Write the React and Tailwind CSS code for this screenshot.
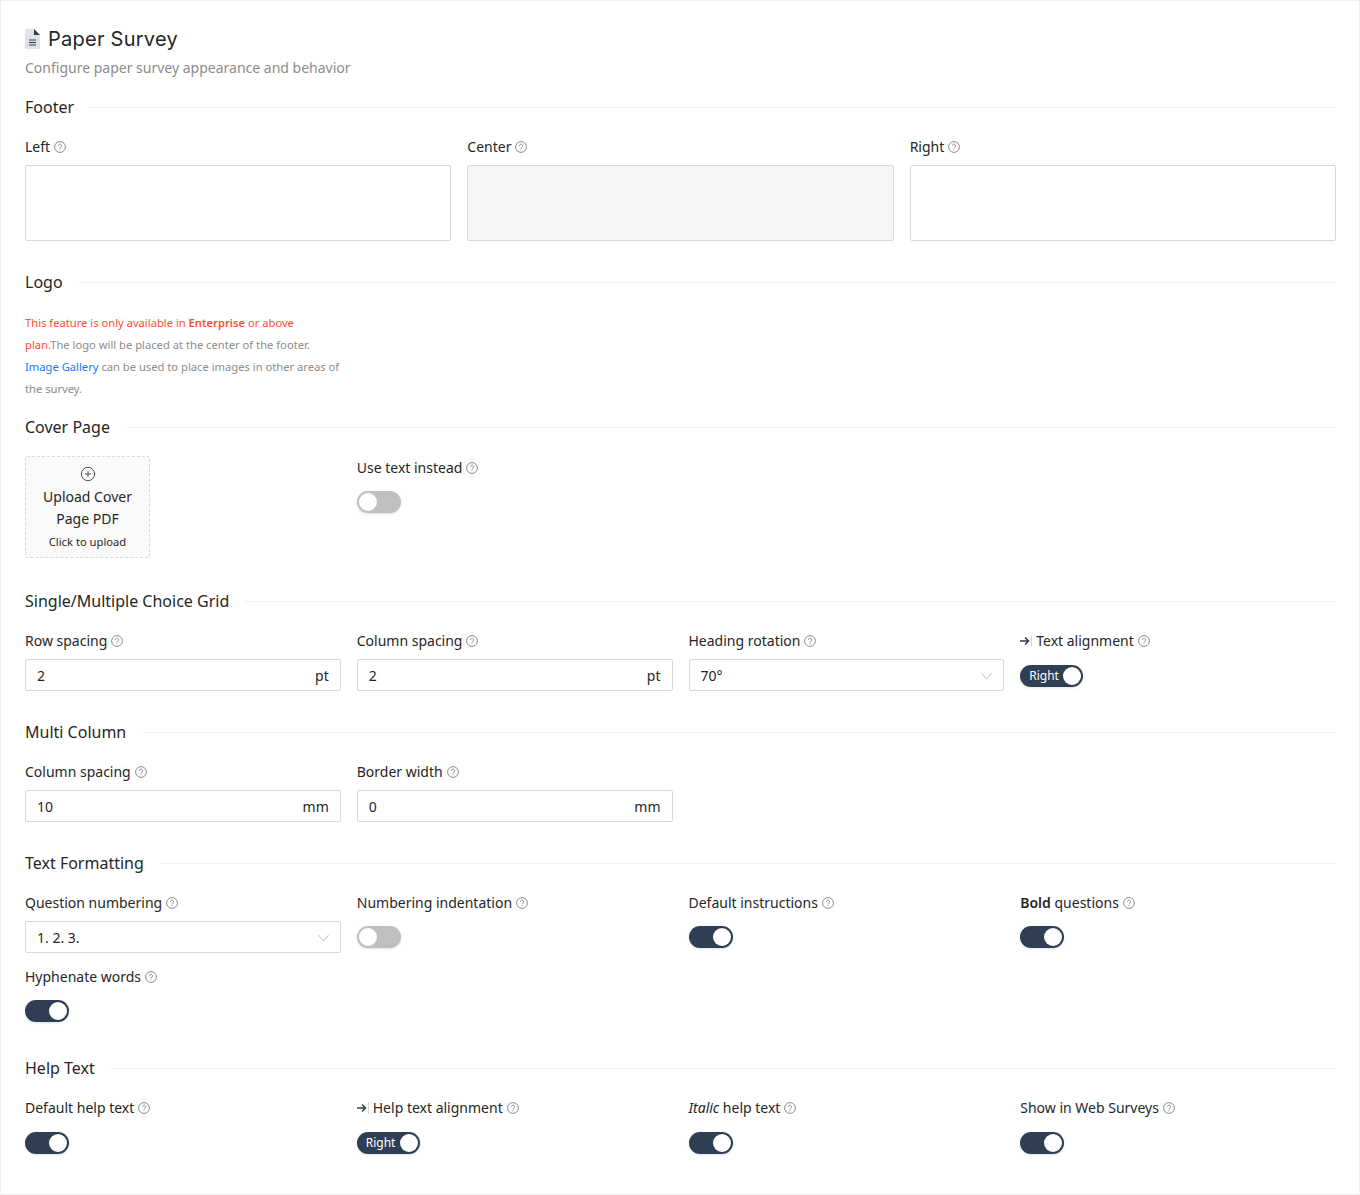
import { CirclePlus } from 'lucide-react'

function Help() {
  return (
    <svg width="12" height="12" viewBox="0 0 12 12" fill="none" stroke="#808080" strokeWidth="0.9" className="ml-1 shrink-0">
      <circle cx="6" cy="6" r="5.4" />
      <path d="M4.4 4.8a1.6 1.6 0 1 1 2.4 1.4c-.5.3-.8.6-.8 1.2" />
      <path d="M6 8.3v.9" />
    </svg>
  )
}

function AlignIcon() {
  return (
    <svg width="13" height="12" viewBox="0 0 13 12" fill="none" className="mr-[3px] shrink-0">
      <path d="M0 6h8M5 2.5 8.5 6 5 9.5" stroke="#2f3e52" strokeWidth="1.5" />
      <path d="M11.5 0.5v11" stroke="#d9d9d9" strokeWidth="1" />
    </svg>
  )
}

function Label({ children, icon }) {
  return (
    <div className="flex h-[22px] items-center text-sm leading-[22px] text-[#262626]">
      {icon && <AlignIcon />}
      <span>{children}</span>
      <Help />
    </div>
  )
}

function Section({ title, className, children }) {
  return (
    <section className={className}>
      <div className="flex h-6 items-center">
        <h3 className="mr-4 text-base font-normal leading-6 text-[#262626]">{title}</h3>
        <div className="h-px flex-1 bg-[#f0f0f0]" />
      </div>
      {children}
    </section>
  )
}

function Toggle({ on, text }) {
  if (text) {
    return (
      <div className="relative h-[22px] w-[63px] rounded-full bg-[#2f3e52] shadow-sm">
        <span className="absolute left-[9px] top-0 text-xs leading-[22px] text-white">{text}</span>
        <span className="absolute right-[2px] top-[2px] h-[18px] w-[18px] rounded-full bg-white" />
      </div>
    )
  }
  return (
    <div className={`relative h-[22px] w-11 rounded-full shadow-sm ${on ? 'bg-[#2f3e52]' : 'bg-[#bfbfbf]'}`}>
      <span className={`absolute top-[2px] h-[18px] w-[18px] rounded-full bg-white ${on ? 'right-[2px]' : 'left-[2px]'}`} />
    </div>
  )
}

function ToggleField({ label, on, text, icon, loose }) {
  return (
    <div>
      <Label icon={icon}>{label}</Label>
      <div className={loose ? 'mt-[13px]' : 'mt-3'}>
        <Toggle on={on} text={text} />
      </div>
    </div>
  )
}

function UnitInput({ label, value, unit }) {
  return (
    <div>
      <Label>{label}</Label>
      <div className="mt-[7px] flex h-8 items-center justify-between rounded-[2px] border border-[#d9d9d9] bg-white px-[11px] pt-px text-sm text-[#262626]">
        <span>{value}</span>
        <span>{unit}</span>
      </div>
    </div>
  )
}

function SelectField({ label, value }) {
  return (
    <div>
      <Label>{label}</Label>
      <div className="mt-[7px] flex h-8 items-center justify-between rounded-[2px] border border-[#d9d9d9] bg-white px-[11px] pt-px text-sm text-[#262626]">
        <span>{value}</span>
        <svg width="11" height="8" viewBox="0 0 11 8" fill="none">
          <path d="M0.5 1 5.5 7 10.5 1" stroke="#bfbfbf" strokeWidth="1" />
        </svg>
      </div>
    </div>
  )
}

function TextBox({ label, disabled }) {
  return (
    <div>
      <Label>{label}</Label>
      <div className={`mt-[7px] h-[76px] rounded-[2px] border border-[#d9d9d9] ${disabled ? 'bg-[#f5f5f5]' : 'bg-white'}`} />
    </div>
  )
}

export default function App() {
  return (
    <div className="h-[1195px] border border-[#f0f0f0] bg-white pl-6 pr-[23px] pt-[21px] font-['Noto_Sans',sans-serif]">
      <header>
        <div className="flex h-[34px] items-center">
          <svg width="15" height="20" viewBox="0 0 15 20" className="mr-2 shrink-0">
            <path d="M1.5 0H9l6 6v12.5a1.5 1.5 0 0 1-1.5 1.5h-12A1.5 1.5 0 0 1 0 18.5v-17A1.5 1.5 0 0 1 1.5 0z" fill="#dfe2e6" />
            <path d="M9 0l6 6H9z" fill="#2f3e52" />
            <path d="M4 11h7M4 13.5h7M4 16h7" stroke="#2f3e52" strokeWidth="1" />
          </svg>
          <h1 className="font-['Inter',sans-serif] text-[20px] font-normal leading-[34px] tracking-[0.25px] text-[#262626]">Paper Survey</h1>
        </div>
        <p className="mt-px text-sm leading-[22px] text-[#8c8c8c]">Configure paper survey appearance and behavior</p>
      </header>

      <Section title="Footer" className="mt-4">
        <div className="mt-[17px] grid grid-cols-3 gap-4">
          <TextBox label="Left" />
          <TextBox label="Center" disabled />
          <TextBox label="Right" />
        </div>
      </Section>

      <Section title="Logo" className="mt-[29px]">
        <p className="mt-[18px] w-[316px] text-[11.2px] leading-[22px] text-[#8c8c8c]">
          <span className="text-[#ff4d2e]">
            This feature is only available in <b className="font-semibold">Enterprise</b> or above
            <br />
            plan.
          </span>
          The logo will be placed at the center of the footer.
          <br />
          <span className="text-[#1677ff]">Image Gallery</span> can be used to place images in other areas of the survey.
        </p>
      </Section>

      <Section title="Cover Page" className="mt-[15px]">
        <div className="mt-[17px] grid grid-cols-4 gap-4">
          <div className="flex h-[102px] w-[125px] flex-col items-center rounded-[2px] border border-dashed border-[#d9d9d9] bg-[#fafafa] pt-[9px] text-center text-[#262626]">
            <CirclePlus size={16} strokeWidth={1.2} />
            <div className="mt-1 text-sm leading-[22px]">Upload Cover Page PDF</div>
            <div className="mt-px text-[11.2px] leading-[22px]">Click to upload</div>
          </div>
          <div className="pt-px">
            <ToggleField label="Use text instead" />
          </div>
        </div>
      </Section>

      <Section title="Single/Multiple Choice Grid" className="mt-[31px]">
        <div className="mt-[17px] grid grid-cols-4 gap-4">
          <UnitInput label="Row spacing" value="2" unit="pt" />
          <UnitInput label="Column spacing" value="2" unit="pt" />
          <SelectField label="Heading rotation" value="70°" />
          <ToggleField label="Text alignment" text="Right" icon loose />
        </div>
      </Section>

      <Section title="Multi Column" className="mt-[29px]">
        <div className="mt-[17px] grid grid-cols-4 gap-4">
          <UnitInput label="Column spacing" value="10" unit="mm" />
          <UnitInput label="Border width" value="0" unit="mm" />
        </div>
      </Section>

      <Section title="Text Formatting" className="mt-[29px]">
        <div className="mt-[17px] grid grid-cols-4 gap-x-4 gap-y-[13px]">
          <SelectField label="Question numbering" value="1. 2. 3." />
          <ToggleField label="Numbering indentation" />
          <ToggleField label="Default instructions" on />
          <ToggleField label={<><b className="font-semibold">Bold</b> questions</>} on />
          <ToggleField label="Hyphenate words" on />
        </div>
      </Section>

      <Section title="Help Text" className="mt-[34px]">
        <div className="mt-[17px] grid grid-cols-4 gap-4">
          <ToggleField label="Default help text" on loose />
          <ToggleField label="Help text alignment" text="Right" icon loose />
          <ToggleField label={<><i>Italic</i> help text</>} on loose />
          <ToggleField label="Show in Web Surveys" on loose />
        </div>
      </Section>
    </div>
  )
}
